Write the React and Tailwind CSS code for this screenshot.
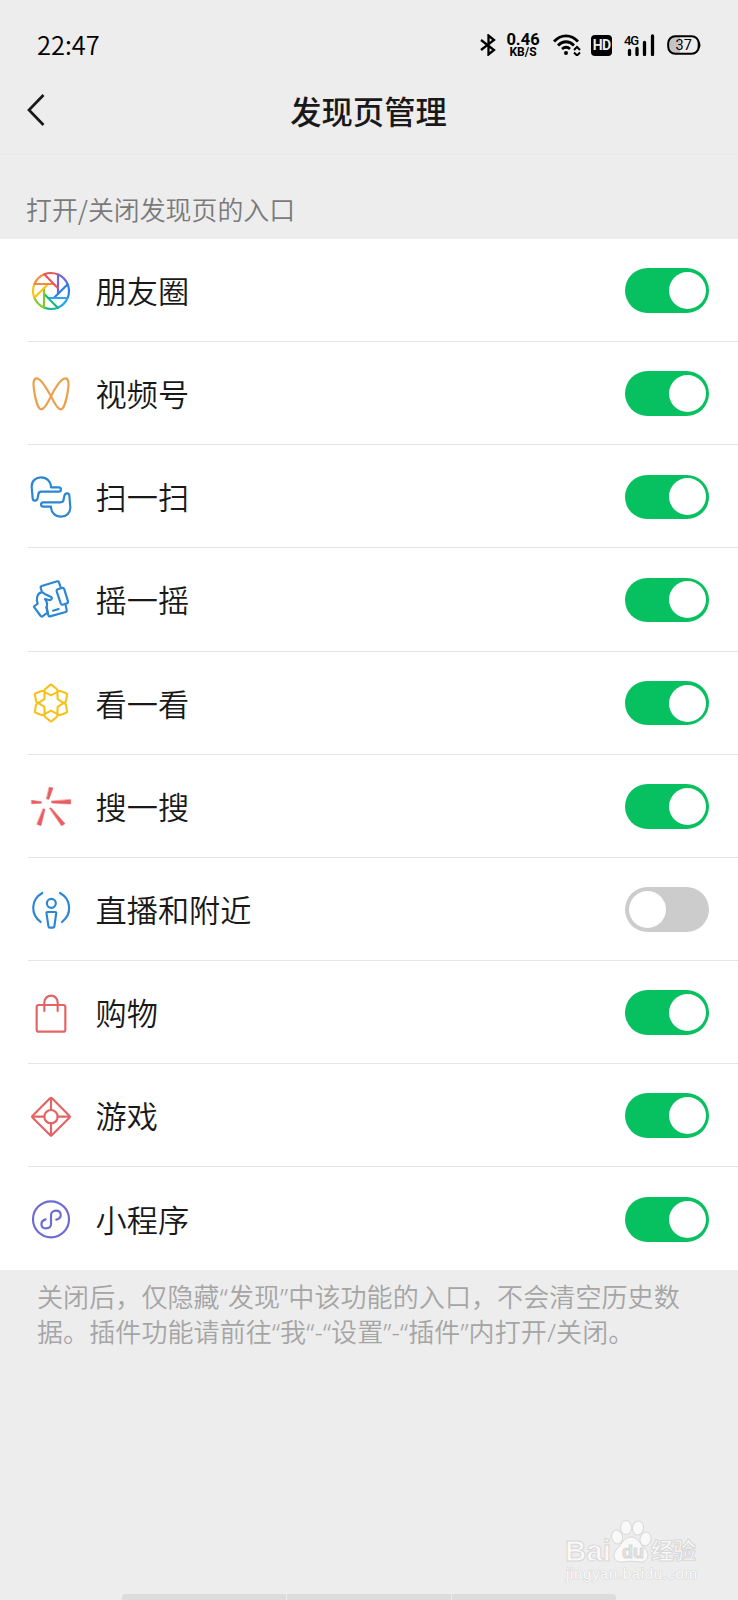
import React, { useState } from 'react';

const APERTURE_COLORS = ['#6a67e0', '#2f7fe0', '#2aa5f0', '#14b98c', '#7ccb2c', '#f5c518', '#f58a3c', '#ea5558'];

const Icon = ({ color, children }) => (
	<svg
		viewBox="0 0 120 120"
		className="size-10 shrink-0 overflow-visible"
		fill="none"
		stroke={color}
		strokeWidth="6.5"
		strokeLinecap="round"
		strokeLinejoin="round"
	>
		{children}
	</svg>
);

const MomentsIcon = () => (
	<Icon>
		{APERTURE_COLORS.map((color, i) => (
			<path key={color} stroke={color} strokeLinecap="butt" transform={`rotate(${i * 45} 60 60)`} d="M81 70V10.3A54 54 0 0 1 110 40" />
		))}
	</Icon>
);

const ChannelsIcon = () => (
	<Icon color="#eda04c">
		<path d="M60 67C48 45 30 13 17 13C6 13 6 30 10 54C14 80 22 106 31 106C40 106 50 88 60 67C70 45 90 13 103 13C114 13 114 30 110 54C106 80 98 106 89 106C80 106 70 88 60 67Z" />
	</Icon>
);

const HAND = 'M2 29C2 12 14 1 30 1C48 1 60 14 60 31H83C92 31 92 44 83 44H32Q22 44 22 53L20 63C18 73 6 74 5 64Z';

const ScanIcon = () => (
	<Icon color="#2b86d4">
		<path d={HAND} />
		<path d={HAND} transform="rotate(180 60 60)" />
	</Icon>
);

const ShakeIcon = () => (
	<Icon color="#2b86d4">
		<path d="M32 33L29 23Q28 19 32 18L79 4Q83 3 84 7L89 22" />
		<path d="M80 28L93 24Q98 23 100 28L111 64Q112 69 108 70L95 74Q91 75 89 70L77 34Q76 30 80 28Z" />
		<path d="M104 76L107 90Q108 95 104 96L57 109Q53 110 52 106L46 82" />
		<path d="M11 78L20 71C14 55 20 39 31 37C37 36 39 41 43 43L59 50C66 54 61 62 54 60L42 57Q51 68 47 81L50 98L34 109Q31 111 29 108L10 82Q8 80 11 78Z" />
		<path d="M66 92L83 87" />
	</Icon>
);

const LookIcon = () => (
	<Icon color="#f6c21c">
		{[0, 60, 120, 180, 240, 300].map((angle) => (
			<path key={angle} transform={`rotate(${angle} 60 60)`} d="M56 7Q60 3 64 7L77 18Q82 23 77 28L60 37L43 28Q38 23 43 18Z" />
		))}
	</Icon>
);

const SearchIcon = () => (
	<Icon color="#e85e61">
		<path
			fill="#e85e61"
			strokeWidth="1.5"
			d="M55 4L66 6L54 40L47 39ZM119 41V54L62 51V46ZM2 43L31 47V52L2 53ZM37 68L42 70L30 119L18 115ZM56 67L60 65L102 113L92 119Z"
		/>
	</Icon>
);

const NearbyIcon = () => (
	<Icon color="#2b86d4">
		<path d="M34 12C-1 32 -2 75 29 99" />
		<path d="M87 12C122 32 123 75 93 99" />
		<circle cx="61" cy="43" r="13.5" />
		<path d="M50 69H72Q76 69 75.500 73L70 113Q69 116 66 116H56Q53 116 52.500 113L46.500 73Q46 69 50 69Z" />
	</Icon>
);

const ShoppingIcon = () => (
	<Icon color="#e36465">
		<rect x="17" y="36" width="86" height="80" rx="6" />
		<path d="M40 54V28A20 20 0 0 1 80 28V54" />
	</Icon>
);

const GamesIcon = () => (
	<Icon color="#e36465">
		<path d="M57 7Q60 4 63 7L115 59Q118 62 115 65L63 117Q60 120 57 117L5 65Q2 62 5 59Z" />
		<circle cx="60" cy="62" r="20" />
		<path d="M60 6V42M60 82V118M4 62H40M80 62H116" />
	</Icon>
);

const MiniProgramIcon = () => (
	<Icon color="#6b6bd2">
		<circle cx="60" cy="61" r="54" />
		<path d="M44 61C26 66 28 88 45 88C54 88 60 83 60 75V49C60 41 66 35 75 35C92 35 95 57 76 62" />
	</Icon>
);

const ENTRIES = [
	{ name: '朋友圈', icon: MomentsIcon, on: true },
	{ name: '视频号', icon: ChannelsIcon, on: true },
	{ name: '扫一扫', icon: ScanIcon, on: true },
	{ name: '摇一摇', icon: ShakeIcon, on: true },
	{ name: '看一看', icon: LookIcon, on: true },
	{ name: '搜一搜', icon: SearchIcon, on: true },
	{ name: '直播和附近', icon: NearbyIcon, on: false },
	{ name: '购物', icon: ShoppingIcon, on: true },
	{ name: '游戏', icon: GamesIcon, on: true },
	{ name: '小程序', icon: MiniProgramIcon, on: true },
];

const Toggle = ({ on, label, onChange }) => (
	<button
		role="switch"
		aria-checked={on}
		aria-label={label}
		onClick={onChange}
		className={`flex h-[44.5px] w-[84px] items-center rounded-full px-[3.5px] ${on ? 'justify-end bg-[#07c160]' : 'justify-start bg-[#cccccc]'}`}
	>
		<span className="size-[37px] rounded-full bg-white" />
	</button>
);

const StatusBar = () => (
	<div className="flex h-[90px] items-center justify-between pr-[36px] pl-[37px] text-black">
		<span className="pb-[3px] font-[Noto_Sans_CJK_SC,sans-serif] text-[25.5px] leading-none font-[350]">22:47</span>
		<div className="flex items-center">
			<svg viewBox="0 0 16 22" className="h-[22px] w-4" fill="none" stroke="currentColor" strokeWidth="2.300">
				<path d="M1 6L14 16L8.500 20.500V1.500L14 6L1 16" />
			</svg>
			<div className="ml-[9px] flex w-[36px] flex-col items-center font-[Roboto,sans-serif] font-bold">
				<span className="text-[16.5px] leading-[14px]">0.46</span>
				<span className="text-[12px] leading-[11px]">KB/S</span>
			</div>
			<svg viewBox="0 0 28 22" className="ml-[12px] h-[22px] w-7" fill="none" stroke="currentColor" strokeWidth="2.800">
				<path d="M1 7.500C8 0 18 0 25 7.500M5 11.500C10 6.500 16 6.500 21 11.500M9 15C12 12.500 14.500 12.500 17 15" />
				<circle cx="13" cy="19" r="2" fill="currentColor" stroke="none" />
				<path d="M21 16L24 13L27 16M21 18.500L24 21.500L27 18.500" strokeWidth="2" />
			</svg>
			<span className="ml-[10px] flex h-[21px] w-[21px] items-center justify-center rounded-[4px] bg-black font-[Roboto,sans-serif] text-[14px] font-bold tracking-[-0.8px] text-[#ededed]">
				HD
			</span>
			<svg viewBox="0 0 31 22" className="ml-[12px] h-[22px] w-[31px]">
				<text x="0" y="10.500" fontSize="13" fontFamily="Roboto, sans-serif" fontWeight="500" textLength="15">4G</text>
				<path d="M5.500 16.500V20.500M13 14.500V20.500M20.500 8.500V20.500M28.500 2V20.500" stroke="currentColor" strokeWidth="3.300" strokeLinecap="round" />
			</svg>
			<svg viewBox="0 0 35 20" className="ml-[12px] h-5 w-[35px]">
				<path d="M8 1.500H13V18.500H8Q1.500 18.500 1.500 12V8Q1.500 1.500 8 1.500Z" fill="#c4c4c4" />
				<rect x="1.200" y="1.200" width="30.500" height="17.600" rx="7" fill="none" stroke="currentColor" strokeWidth="2" />
				<path d="M32 6Q35 10 32 14Z" />
				<text x="8.500" y="15" fontSize="14.500" fontFamily="Roboto, sans-serif">37</text>
			</svg>
		</div>
	</div>
);

const Watermark = () => (
	<svg viewBox="0 0 140 70" className="absolute top-[1517px] left-[562px] h-[70px] w-[140px]" fill="#f9f9f9" stroke="#d8d8d8" strokeWidth="1">
		<text x="3" y="44" fontSize="29" fontFamily="Liberation Sans, sans-serif" fontWeight="bold" textLength="46" lengthAdjust="spacingAndGlyphs">Bai</text>
		<ellipse cx="55" cy="20" rx="5.500" ry="7" transform="rotate(-15 55 20)" />
		<ellipse cx="64" cy="10.500" rx="5.500" ry="7" />
		<ellipse cx="76" cy="11" rx="5.500" ry="7" transform="rotate(10 76 11)" />
		<ellipse cx="83.500" cy="22" rx="5.500" ry="7" transform="rotate(15 83.500 22)" />
		<path d="M69 20C76 20 78 27 83 32C89 38 85 46 77 45C71 44 67 44 61 45C52 46 49 38 55 32C60 27 62 20 69 20Z" />
		<text x="60" y="41" fontSize="18" fontFamily="Liberation Sans, sans-serif" fontWeight="bold" fill="#e4e4e4">du</text>
		<text x="89" y="42" fontSize="23" fontFamily="Noto Sans CJK SC, sans-serif" fontWeight="bold" textLength="45">经验</text>
		<text x="4" y="62" fontSize="15" fontFamily="Liberation Sans, sans-serif" textLength="131" stroke="#d9d9d9" strokeWidth="1.200" paintOrder="stroke">jingyan.baidu.com</text>
	</svg>
);

const App = () => {
	const [entries, setEntries] = useState(ENTRIES);

	const toggleEntry = (name) => {
		setEntries(entries.map((entry) => (entry.name === name ? { ...entry, on: !entry.on } : entry)));
	};

	return (
		<div lang="zh-CN" className="relative flex h-[1600px] w-[738px] flex-col overflow-hidden bg-[#ededed] font-[Noto_Sans_CJK_SC,sans-serif] text-[#191919]">
			<StatusBar />
			<header className="flex h-[65px] items-start border-b border-[#e9e9e9] px-[27px]">
				<button aria-label="返回" className="mt-[4px] w-[30px]">
					<svg viewBox="0 0 18 32" className="h-8 w-[18px]" fill="none" stroke="currentColor" strokeWidth="2.700">
						<path d="M16.500 1L2 16L16.500 31" />
					</svg>
				</button>
				<h1 className="flex-1 pr-[31px] text-center text-[31.3px] leading-[41px] font-medium">发现页管理</h1>
			</header>
			<p className="h-[84px] pt-[36px] pl-[26px] text-[25.9px] leading-[36px] font-[350] text-[#7a7a7a]">打开/关闭发现页的入口</p>

			<ul className="bg-white">
				{entries.map(({ name, icon: EntryIcon, on }, i) => (
					<li key={name} className="flex h-[103.15px] items-center pl-[28px]">
						<div className={`flex h-full flex-1 items-center pt-px pr-[29px] pl-[3px] ${i < entries.length - 1 ? 'border-b border-[#e5e5e5]' : ''}`}>
							<EntryIcon />
							<span className="ml-[24.5px] flex-1 pb-px text-[31.200px] leading-10 font-[350]">{name}</span>
							<Toggle on={on} label={name} onChange={() => toggleEntry(name)} />
						</div>
					</li>
				))}
			</ul>

			<p className="pt-[10px] pr-[40px] pl-[37px] font-[Noto_Sans,Noto_Sans_CJK_SC,sans-serif] text-[26px] leading-[34.5px] font-[350] tracking-[0.1px] whitespace-nowrap text-[#a5a5a5]">
				关闭后，仅隐藏“发现”中该功能的入口，不会清空历史数
				<br />
				据。插件功能请前往“我“-“设置”-“插件”内打开/关闭。
			</p>

			<div className="mt-auto ml-[122px] flex h-[6px] w-[494px] gap-px overflow-hidden rounded-t">
				<span className="flex-1 bg-[#dcdcdc]" />
				<span className="flex-1 bg-[#dcdcdc]" />
				<span className="flex-1 bg-[#dcdcdc]" />
			</div>
			<Watermark />
		</div>
	);
};

export default App;
